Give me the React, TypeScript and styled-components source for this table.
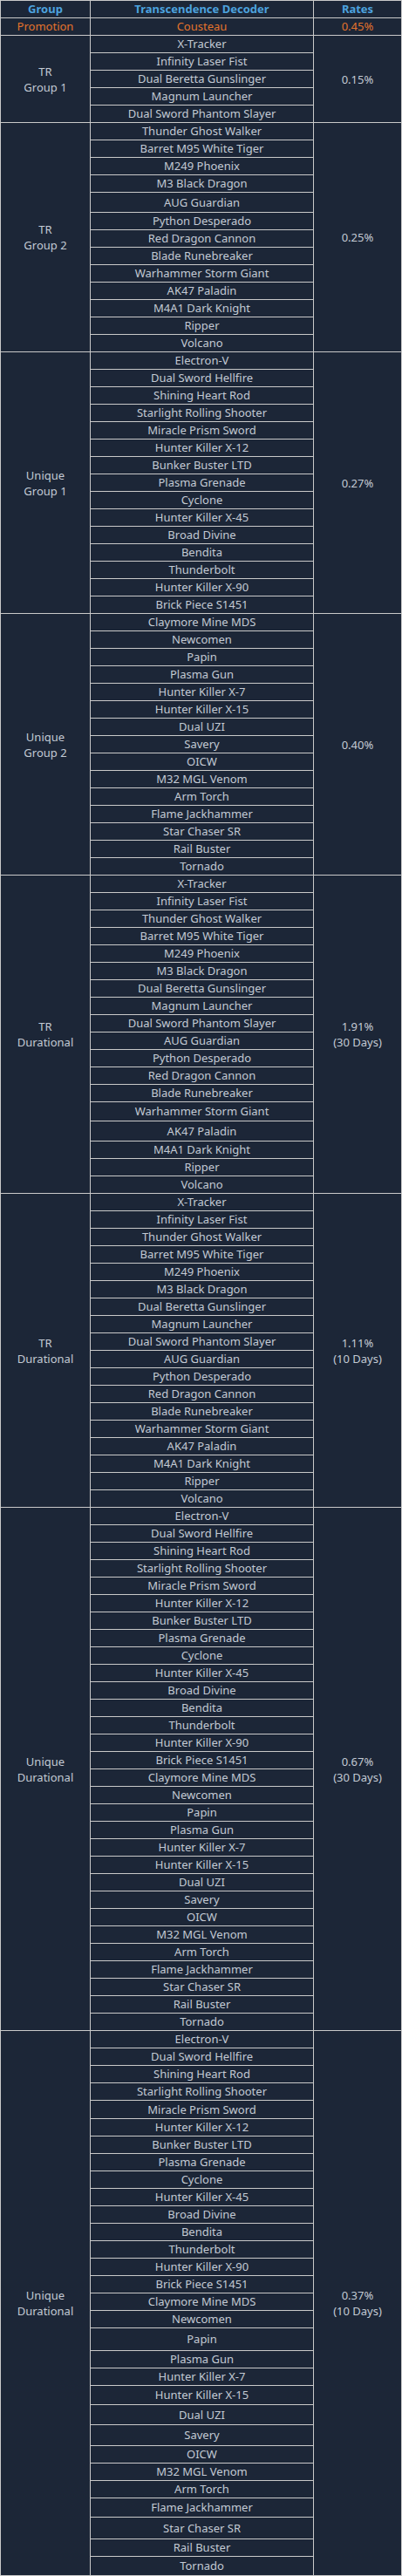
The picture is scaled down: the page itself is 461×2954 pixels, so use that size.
import styled, { createGlobalStyle } from "styled-components";

type Item = { name: string; extra?: number };
type Section = { group: string[]; rate: string[]; items: Item[] };

const GlobalStyle = createGlobalStyle`
  html, body {
    margin: 0;
    padding: 0;
    background: #1c2637;
  }
`;

const trGroup1: Item[] = [
  { name: "X-Tracker" },
  { name: "Infinity Laser Fist" },
  { name: "Dual Beretta Gunslinger" },
  { name: "Magnum Launcher" },
  { name: "Dual Sword Phantom Slayer" },
];

const trGroup2: Item[] = [
  { name: "Thunder Ghost Walker" },
  { name: "Barret M95 White Tiger" },
  { name: "M249 Phoenix" },
  { name: "M3 Black Dragon" },
  { name: "AUG Guardian", extra: 3 },
  { name: "Python Desperado" },
  { name: "Red Dragon Cannon" },
  { name: "Blade Runebreaker" },
  { name: "Warhammer Storm Giant" },
  { name: "AK47 Paladin" },
  { name: "M4A1 Dark Knight" },
  { name: "Ripper" },
  { name: "Volcano" },
];

const uniqueGroup1 = [
  "Electron-V",
  "Dual Sword Hellfire",
  "Shining Heart Rod",
  "Starlight Rolling Shooter",
  "Miracle Prism Sword",
  "Hunter Killer X-12",
  "Bunker Buster LTD",
  "Plasma Grenade",
  "Cyclone",
  "Hunter Killer X-45",
  "Broad Divine",
  "Bendita",
  "Thunderbolt",
  "Hunter Killer X-90",
  "Brick Piece S1451",
];

const uniqueGroup2 = [
  "Claymore Mine MDS",
  "Newcomen",
  "Papin",
  "Plasma Gun",
  "Hunter Killer X-7",
  "Hunter Killer X-15",
  "Dual UZI",
  "Savery",
  "OICW",
  "M32 MGL Venom",
  "Arm Torch",
  "Flame Jackhammer",
  "Star Chaser SR",
  "Rail Buster",
  "Tornado",
];

const trDurational = [
  "X-Tracker",
  "Infinity Laser Fist",
  "Thunder Ghost Walker",
  "Barret M95 White Tiger",
  "M249 Phoenix",
  "M3 Black Dragon",
  "Dual Beretta Gunslinger",
  "Magnum Launcher",
  "Dual Sword Phantom Slayer",
  "AUG Guardian",
  "Python Desperado",
  "Red Dragon Cannon",
  "Blade Runebreaker",
  "Warhammer Storm Giant",
  "AK47 Paladin",
  "M4A1 Dark Knight",
  "Ripper",
  "Volcano",
];

// extra pixels some rows carry in the source page
const withExtra = (names: string[], extra: Record<string, number> = {}): Item[] =>
  names.map((name) => ({ name, extra: extra[name] }));

const sections: Section[] = [
  { group: ["TR", "Group 1"], rate: ["0.15%"], items: trGroup1 },
  { group: ["TR", "Group 2"], rate: ["0.25%"], items: trGroup2 },
  { group: ["Unique", "Group 1"], rate: ["0.27%"], items: withExtra(uniqueGroup1) },
  { group: ["Unique", "Group 2"], rate: ["0.40%"], items: withExtra(uniqueGroup2) },
  {
    group: ["TR", "Durational"],
    rate: ["1.91%", "(30 Days)"],
    items: withExtra(trDurational, { "Warhammer Storm Giant": 2, "AK47 Paladin": 3 }),
  },
  { group: ["TR", "Durational"], rate: ["1.11%", "(10 Days)"], items: withExtra(trDurational) },
  {
    group: ["Unique", "Durational"],
    rate: ["0.67%", "(30 Days)"],
    items: withExtra([...uniqueGroup1, ...uniqueGroup2]),
  },
  {
    group: ["Unique", "Durational"],
    rate: ["0.37%", "(10 Days)"],
    items: withExtra([...uniqueGroup1, ...uniqueGroup2], {
      "Miracle Prism Sword": 1,
      Papin: 6,
      "Hunter Killer X-15": 2,
      "Dual UZI": 3,
      Savery: 4,
      "Flame Jackhammer": 2,
      "Star Chaser SR": 5,
      Tornado: 2,
    }),
  },
];

const App = () => {
  return (
    <>
      <GlobalStyle />
      <Table>
        <HeadCell $col={1}>Group</HeadCell>
        <HeadCell $col={2}>Transcendence Decoder</HeadCell>
        <HeadCell $col={3}>Rates</HeadCell>

        <PromoCell $col={1}>Promotion</PromoCell>
        <PromoCell $col={2}>Cousteau</PromoCell>
        <PromoCell $col={3}>0.45%</PromoCell>

        {sections.map((section, i) => (
          <Section key={i} section={section} />
        ))}
      </Table>
    </>
  );
};

const Section = ({ section }: { section: Section }) => {
  const span = section.items.length;
  return (
    <>
      <SpanCell $col={1} $span={span}>
        {section.group.map((line) => (
          <Line key={line}>{line}</Line>
        ))}
      </SpanCell>
      {section.items.slice(0, 1).map((item) => (
        <ItemCell key={item.name} $extra={item.extra ?? 0}>
          {item.name}
        </ItemCell>
      ))}
      <SpanCell $col={3} $span={span}>
        {section.rate.map((line) => (
          <Line key={line}>{line}</Line>
        ))}
      </SpanCell>
      {section.items.slice(1).map((item, i) => (
        <ItemCell key={item.name + i} $extra={item.extra ?? 0}>
          {item.name}
        </ItemCell>
      ))}
    </>
  );
};

export default App;

const Table = styled.div`
  display: grid;
  grid-template-columns: 102px 255px 100px;
  grid-auto-rows: auto;
  gap: 1px;
  padding: 1px;
  width: 461px;
  box-sizing: border-box;
  background-color: #c9c9c9;
  font-family: "Noto Sans", "Open Sans", sans-serif;
  font-size: 13px;
  color: #c3cad4;
`;

const Cell = styled.div<{ $col: number }>`
  grid-column: ${(p) => p.$col};
  background-color: #1c2637;
  display: flex;
  flex-direction: column;
  align-items: center;
  justify-content: center;
  text-align: center;
  height: 19px;
  line-height: 19px;
  white-space: nowrap;
`;

const HeadCell = styled(Cell)`
  color: #4ca2de;
  font-weight: 700;
`;

const PromoCell = styled(Cell)`
  color: #e3732c;
`;

const ItemCell = styled.div<{ $extra: number }>`
  grid-column: 2;
  background-color: #1c2637;
  display: flex;
  align-items: center;
  justify-content: center;
  height: ${(p) => 19 + p.$extra}px;
  line-height: 19px;
  white-space: nowrap;
`;

const SpanCell = styled(Cell)<{ $span: number }>`
  grid-row: span ${(p) => p.$span};
  height: auto;
  line-height: 18px;
`;

const Line = styled.span`
  display: block;
`;
